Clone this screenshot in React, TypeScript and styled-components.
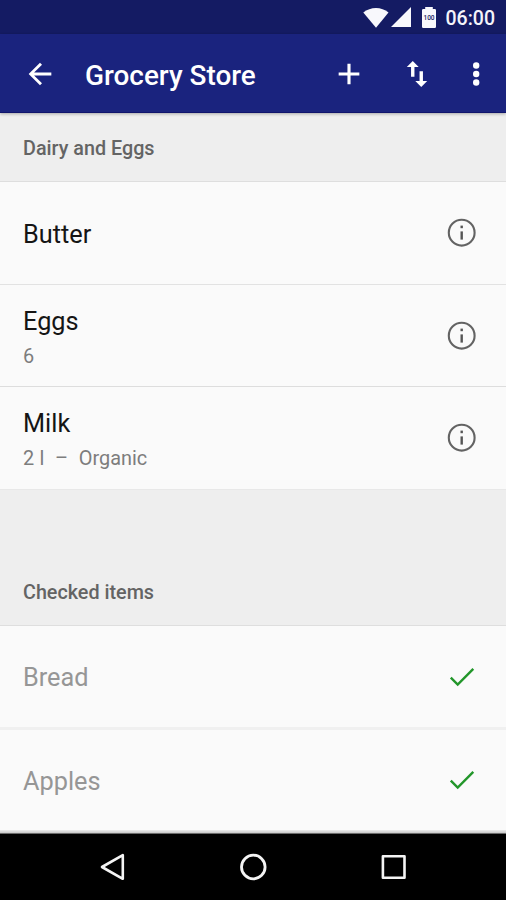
import React from 'react';
import styled, { createGlobalStyle } from 'styled-components';

const GlobalStyle = createGlobalStyle`
  * { box-sizing: border-box; }
  body { margin: 0; background: #eeeeee; font-family: Roboto, sans-serif; }
  svg { display: block; flex: none; }
`;

const Screen = styled.div`
  width: 506px;
  height: 900px;
  display: flex;
  flex-direction: column;
  overflow: hidden;
  background: #eeeeee;
`;

const StatusBar = styled.div`
  height: 34px;
  flex: none;
  display: flex;
  align-items: center;
  justify-content: flex-end;
  padding: 0 11px 0 0;
  background: #141b63;
  color: #f4f4fa;
`;

const Clock = styled.span`
  margin-left: 9px;
  padding-top: 3px;
  font-size: 19.5px;
  line-height: 22px;
  font-weight: 500;
`;

const AppBar = styled.header`
  height: 79px;
  flex: none;
  display: flex;
  align-items: center;
  padding: 2px 21px 0 23px;
  background: #1a237e;
  border-bottom: 1px solid #10156c;
  color: #ffffff;
  box-shadow: 0 1px 3px rgba(0, 0, 0, 0.3);
  z-index: 1;
`;

const Title = styled.h1`
  flex: 1;
  margin: 3px 0 0 28px;
  font-size: 27.9px;
  line-height: 34px;
  font-weight: 500;
`;

const Actions = styled.div`
  display: flex;
  align-items: center;
  gap: 34px;
`;

const SectionHeader = styled.h2<{ $spaced?: boolean }>`
  height: ${(p) => (p.$spaced ? 136 : 69)}px;
  flex: none;
  display: flex;
  align-items: flex-end;
  margin: 0;
  padding: 0 23px 20px;
  border-bottom: 1px solid #dedede;
  background: #eeeeee;
  color: #646464;
  font-size: 19.75px;
  line-height: 24px;
  font-weight: 500;
`;

const Row = styled.div<{ $height: number; $divider: string }>`
  height: ${(p) => p.$height}px;
  flex: none;
  display: flex;
  align-items: center;
  justify-content: space-between;
  padding: 0 27px 0 23px;
  background: #fafafa;
  border-bottom: ${(p) => p.$divider};
`;

const ItemText = styled.div`
  display: flex;
  flex-direction: column;
  gap: 8px;
  padding-top: 3px;
`;

const Name = styled.span<{ $checked?: boolean }>`
  color: ${(p) => (p.$checked ? '#969696' : '#151515')};
  font-size: 25.3px;
  line-height: 30px;
`;

const Detail = styled.span`
  margin-bottom: -1px;
  color: #7d7d7d;
  font-size: 19.9px;
  line-height: 24px;
  white-space: pre;
  word-spacing: 0.4px;
`;

const NavBar = styled.nav`
  flex: 1;
  display: flex;
  align-items: center;
  justify-content: center;
  gap: 112px;
  padding-bottom: 1px;
  background: #000000;
  border-top: 1px solid #6b6b6b;
`;

const ListEdge = styled.div`
  height: 3px;
  flex: none;
  background: linear-gradient(#ececec, #c8c8c8);
`;

const BatteryLabel = styled.text`
  font: 500 6.5px Roboto, sans-serif;
  fill: #141b63;
`;

const WifiIcon = () => (
  <svg width="26" height="21" viewBox="0 0 26 21" fill="#f8f8fc">
    <path d="M0.3 5.5C7.5-.5 18.5-.5 25.5 5.5L13 20.8Z" />
  </svg>
);

const SignalIcon = () => (
  <svg width="20" height="20" viewBox="0 0 20 20" fill="#f8f8fc">
    <path d="M20 0V20H0Z" />
  </svg>
);

const BatteryIcon = () => (
  <svg width="14" height="21" viewBox="0 0 14 21" fill="#f8f8fc">
    <path d="M3.2 0H10.8V2H12.8Q14 2 14 3.2V19.8Q14 21 12.8 21H1.2Q0 21 0 19.8V3.2Q0 2 1.2 2H3.2Z" />
    <BatteryLabel x="7" y="12.6" textAnchor="middle">100</BatteryLabel>
  </svg>
);

const StatusIcons = styled.div`
  display: flex;
  align-items: center;
  gap: 2px;
  & > :last-child { margin-left: 9px; }
  margin-right: 1px;
`;

const BackIcon = () => (
  <svg width="34" height="34" viewBox="0 0 24 24" fill="currentColor">
    <path d="M20 11H7.83l5.59-5.59L12 4l-8 8 8 8 1.41-1.41L7.83 13H20v-2z" />
  </svg>
);

const AddIcon = () => (
  <svg width="34" height="34" viewBox="0 0 24 24" fill="currentColor">
    <path d="M19.3 13.1h-6.2v6.2h-2.2v-6.2H4.7v-2.2h6.2V4.7h2.2v6.2h6.2z" />
  </svg>
);

const SortIcon = () => (
  <svg width="34" height="34" viewBox="0 0 24 24" fill="currentColor">
    <path d="M16.2 17.01V10h-2.4v7.01h-3L15 21.2l4.2-4.19h-3zM9 2.8L4.8 6.99h3V14h2.4V6.99h3L9 2.8z" />
  </svg>
);

const MoreIcon = () => (
  <svg width="17" height="34" viewBox="0 0 17 34" fill="currentColor">
    <circle cx="8.2" cy="8.5" r="3.2" />
    <circle cx="8.2" cy="17" r="3.2" />
    <circle cx="8.2" cy="25.5" r="3.2" />
  </svg>
);

const InfoIcon = () => (
  <svg width="34" height="34" viewBox="0 0 34 34" fill="none">
    <circle cx="16.7" cy="16.7" r="12.9" stroke="#636363" strokeWidth="2.1" />
    <path d="M16.7 15.4V23.6" stroke="#555" strokeWidth="2.4" />
    <path d="M16.7 9.6V12.2" stroke="#555" strokeWidth="2.4" />
  </svg>
);

const CheckIcon = () => (
  <svg width="34" height="34" viewBox="0 0 34 34" fill="none">
    <path d="M5.8 17.6L12.7 24.5L28.3 8.9" stroke="#22962a" strokeWidth="2.4" />
  </svg>
);

const NavBackIcon = () => (
  <svg width="28" height="30" viewBox="0 0 28 30" fill="none" stroke="#f4f4f4" strokeWidth="2.6" strokeLinejoin="round">
    <path d="M3 15L23.8 3.2V26.8Z" />
  </svg>
);

const NavHomeIcon = () => (
  <svg width="28" height="30" viewBox="0 0 28 30" fill="none" stroke="#f4f4f4" strokeWidth="2.8">
    <circle cx="14.3" cy="15" r="11.8" />
  </svg>
);

const NavRecentIcon = () => (
  <svg width="28" height="30" viewBox="0 0 28 30" fill="none" stroke="#f4f4f4" strokeWidth="2.6" strokeLinejoin="round">
    <rect x="3.9" y="4.2" width="21.6" height="21.6" />
  </svg>
);

interface Item {
  name: string;
  detail?: string;
  height: number;
  divider: string;
}

const openItems: Item[] = [
  { name: 'Butter', height: 103, divider: '1px solid #e2e2e2' },
  { name: 'Eggs', detail: '6', height: 102, divider: '1px solid #dddddd' },
  { name: 'Milk', detail: '2 l  –  Organic', height: 103, divider: '1px solid #e8e8e8' },
];

const checkedItems: Item[] = [
  { name: 'Bread', height: 104, divider: '3px solid #f0f0f0' },
  { name: 'Apples', height: 100, divider: '0 none' },
];

export default function App() {
  return (
    <Screen>
      <GlobalStyle />
      <StatusBar>
        <StatusIcons>
          <WifiIcon />
          <SignalIcon />
          <BatteryIcon />
        </StatusIcons>
        <Clock>06:00</Clock>
      </StatusBar>
      <AppBar>
        <BackIcon />
        <Title>Grocery Store</Title>
        <Actions>
          <AddIcon />
          <SortIcon />
          <MoreIcon />
        </Actions>
      </AppBar>
      <SectionHeader>Dairy and Eggs</SectionHeader>
      {openItems.map((item) => (
        <Row key={item.name} $height={item.height} $divider={item.divider}>
          <ItemText>
            <Name>{item.name}</Name>
            {item.detail && <Detail>{item.detail}</Detail>}
          </ItemText>
          <InfoIcon />
        </Row>
      ))}
      <SectionHeader $spaced>Checked items</SectionHeader>
      {checkedItems.map((item) => (
        <Row key={item.name} $height={item.height} $divider={item.divider}>
          <ItemText>
            <Name $checked>{item.name}</Name>
          </ItemText>
          <CheckIcon />
        </Row>
      ))}
      <ListEdge />
      <NavBar>
        <NavBackIcon />
        <NavHomeIcon />
        <NavRecentIcon />
      </NavBar>
    </Screen>
  );
}
